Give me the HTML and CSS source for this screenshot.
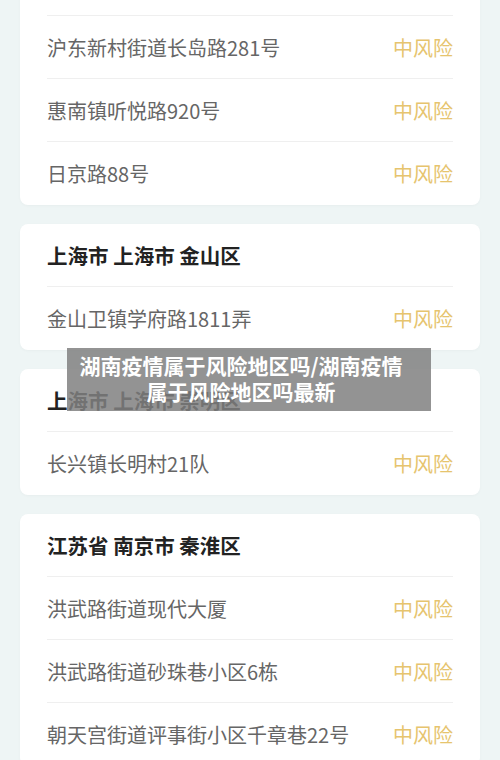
FILE: index.html
```html
<!DOCTYPE html>
<html lang="zh-CN">
  <head>
    <meta charset="UTF-8" />
    <meta name="viewport" content="width=device-width, initial-scale=1.0" />
    <title>风险地区</title>
    <link rel="stylesheet" href="styles.css">
  </head>

  <body>
    <div class="list">
      <div class="card">
        <div class="row"></div>
        <div class="row">
          <span class="addr">沪东新村街道长岛路281号</span>
          <span class="level">中风险</span>
        </div>
        <div class="row">
          <span class="addr">惠南镇听悦路920号</span>
          <span class="level">中风险</span>
        </div>
        <div class="row">
          <span class="addr">日京路88号</span>
          <span class="level">中风险</span>
        </div>
      </div>

      <div class="card">
        <div class="row head">上海市 上海市 金山区</div>
        <div class="row">
          <span class="addr">金山卫镇学府路1811弄</span>
          <span class="level">中风险</span>
        </div>
      </div>

      <div class="card">
        <div class="row head">上海市 上海市 崇明区</div>
        <div class="row">
          <span class="addr">长兴镇长明村21队</span>
          <span class="level">中风险</span>
        </div>
      </div>

      <div class="card">
        <div class="row head">江苏省 南京市 秦淮区</div>
        <div class="row">
          <span class="addr">洪武路街道现代大厦</span>
          <span class="level">中风险</span>
        </div>
        <div class="row">
          <span class="addr">洪武路街道砂珠巷小区6栋</span>
          <span class="level">中风险</span>
        </div>
        <div class="row">
          <span class="addr">朝天宫街道评事街小区千章巷22号</span>
          <span class="level">中风险</span>
        </div>
      </div>
    </div>

    <div class="caption">湖南疫情属于风险地区吗/湖南疫情属于风险地区吗最新</div>
  </body>
</html>
```

FILE: styles.css
```css
body {
  font-family: "Noto Sans CJK SC", "Noto Sans", sans-serif;
  background-color: #eef5f5;
  margin: 0;
  overflow: hidden;
}

.list {
  display: flex;
  flex-direction: column;
  gap: 19px;
  padding: 0 20px;
  margin-top: -47px;
}

.card {
  background-color: #ffffff;
  border-radius: 8px;
  padding: 0 27px;
  box-shadow: 0 1px 3px rgba(0, 0, 0, 0.03);
}

.row {
  height: 63px;
  display: flex;
  align-items: center;
  justify-content: space-between;
  font-size: 20px;
  border-bottom: 1px solid #efefef;
  box-sizing: border-box;
}

.row:last-child {
  border-bottom: none;
}

.row.head {
  font-weight: bold;
  font-size: 20.5px;
  color: #222;
}

.addr {
  color: #666;
}

.level {
  color: #e6c46e;
}

.caption {
  position: absolute;
  top: 348px;
  left: 67px;
  width: 364px;
  height: 63px;
  box-sizing: border-box;
  padding: 4px 24px 7px 8px;
  background-color: rgba(128, 128, 128, 0.85);
  color: #ffffff;
  font-size: 21px;
  font-weight: bold;
  line-height: 26px;
  text-align: center;
}
```
